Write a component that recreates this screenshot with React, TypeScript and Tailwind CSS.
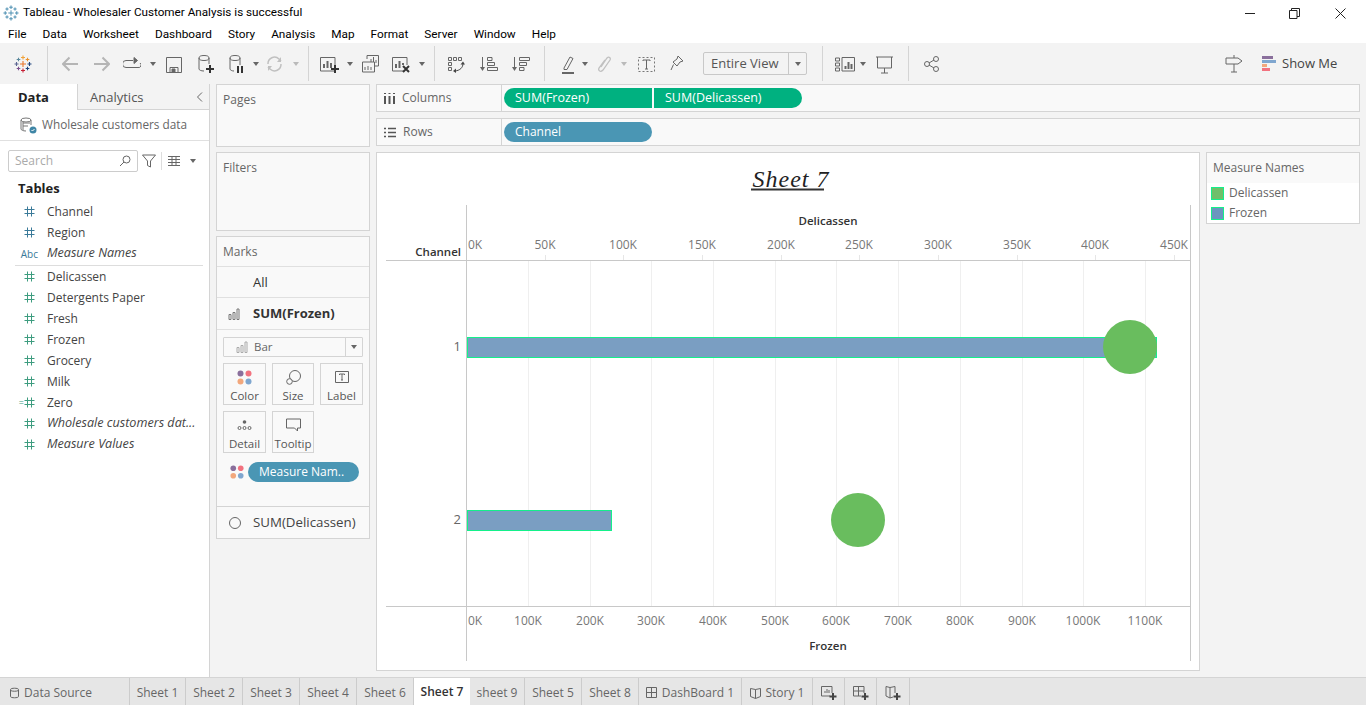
import React from 'react'

function Caret({ className = '' }: { className?: string }) {
  return (
    <svg width="6" height="4" viewBox="0 0 6 4" className={`shrink-0 ${className}`}>
      <path d="M0 0h6L3 4z" fill="#666" />
    </svg>
  )
}

function Sep({ className = '' }: { className?: string }) {
  return <div className={`w-px h-[35px] bg-[#d4d4d4] shrink-0 ${className}`} />
}

function Icon({ w, h = 20, className = '', children }: { w: number; h?: number; className?: string; children: React.ReactNode }) {
  return (
    <svg width={w} height={h} viewBox={`0 0 ${w} ${h}`} fill="none" stroke="#666" strokeWidth="1" className={`shrink-0 ${className}`}>
      {children}
    </svg>
  )
}

function TableauLogo({ size = 18, mono = false }: { size?: number; mono?: boolean }) {
  const c = (x: string) => (mono ? '#4a8db0' : x)
  const cross = (x: number, y: number, r: number, col: string) => (
    <path key={`${x}-${y}`} d={`M${x - r} ${y}h${r * 2}M${x} ${y - r}v${r * 2}`} stroke={c(col)} strokeWidth="1.1" />
  )
  return (
    <svg width={size} height={size} viewBox="0 0 18 18" fill="none" className="shrink-0">
      {cross(9, 9, 3, '#e8762b')}
      {cross(9, 2.5, 2, '#f0a33a')}
      {cross(9, 15.5, 2, '#c72035')}
      {cross(2.5, 9, 2, '#5b6591')}
      {cross(15.5, 9, 2, '#1f447e')}
      {cross(4.5, 4.5, 1.8, '#59879b')}
      {cross(13.5, 4.5, 1.8, '#eb912b')}
      {cross(4.5, 13.5, 1.8, '#7a4f8c')}
      {cross(13.5, 13.5, 1.8, '#1f447e')}
    </svg>
  )
}

function Hash({ color = '#3d9c7f' }: { color?: string }) {
  return (
    <svg width="11" height="11" viewBox="0 0 11 11" className="shrink-0" fill="none" stroke={color} strokeWidth="1">
      <path d="M3.5 0.5v10M7.5 0.5v10M0.5 3.5h10M0.5 7.5h10" />
    </svg>
  )
}

function Dots({ size = 15 }: { size?: number }) {
  return (
    <svg width={size} height={size} viewBox="0 0 15 15" className="shrink-0">
      <circle cx="3.5" cy="3.5" r="3" fill="#8a6f9c" />
      <circle cx="11.5" cy="3.5" r="3" fill="#f2727f" />
      <circle cx="3.5" cy="11.5" r="3" fill="#f2a77c" />
      <circle cx="11.5" cy="11.5" r="3" fill="#7fa6cf" />
    </svg>
  )
}

function BarGlyph({ color = '#777' }: { color?: string }) {
  return (
    <svg width="12" height="12" viewBox="0 0 12 12" fill="none" stroke={color} className="shrink-0">
      <path d="M1 6.5h2v5H1zM5 4.5h2v7H5zM9 1h2v10.5H9z" />
    </svg>
  )
}

function Toolbar() {
  return (
    <div className="h-[41px] bg-[#f3f3f3] flex items-center shrink-0 text-[#555]">
      <div className="ml-[14px]"><TableauLogo size={18} /></div>
      <Sep className="ml-[15px]" />
      <Icon w={16} className="ml-[14px]"><path d="M16 10H1M7.5 3.5L1 10l6.5 6.5" stroke="#b5b5b5" strokeWidth="2" /></Icon>
      <Icon w={16} className="ml-[16px]"><path d="M0 10h15M8.5 3.5L15 10l-6.5 6.5" stroke="#b5b5b5" strokeWidth="2" /></Icon>
      <Icon w={18} className="ml-[13px]"><path d="M10 6.5H3a3 3 0 0 0 0 7h12a2.5 2.5 0 0 0 2-4.5" /><path d="M11 3.5l3.5 3-3.5 3z" fill="#666" /></Icon>
      <Caret className="ml-[9px]" />
      <Icon w={16} className="ml-[10px]"><path d="M.5 3.5h15v15H.5zM4 18.5v-5h8v5" /><path d="M6 15h3v3H6z" fill="#666" /></Icon>
      <Icon w={16} className="ml-[16px]"><ellipse cx="6" cy="4" rx="5" ry="2.5" /><path d="M1 4v11c0 1 2 2 5 2M11 4v6" /><path d="M12 11v8M8 15h8" strokeWidth="2" stroke="#333" /></Icon>
      <Icon w={15} className="ml-[15px]"><ellipse cx="6" cy="4" rx="5" ry="2.5" /><path d="M1 4v11c0 1 2 2 4 2M11 4v7" /><path d="M9 12v7M13 12v7" strokeWidth="2" stroke="#333" /></Icon>
      <Caret className="ml-[9px]" />
      <Icon w={17} className="ml-[7px]"><path d="M2 10a6.5 6.5 0 0 1 11-5l2 2M15 10a6.5 6.5 0 0 1-11 5l-2-2" stroke="#c0c0c0" strokeWidth="1.5" /><path d="M15 3v5h-4zM2 17v-5h4z" fill="#c0c0c0" stroke="none" /></Icon>
      <Caret className="ml-[10px] opacity-40" />
      <Sep className="ml-[9px]" />
      <Icon w={20} className="ml-[11px]"><path d="M14 17H.5V3.5H15V11" /><path d="M4 14v-4M7.5 14V7M11 14v-5" strokeWidth="2" /><path d="M15 11v8M11 15h8" strokeWidth="2" stroke="#333" /></Icon>
      <Caret className="ml-[7px]" />
      <Icon w={17} className="ml-[9px]"><path d="M5 5V1.5h11.5V12H13" /><path d="M.5 8h12v10H.5z" fill="#f3f3f3" /><path d="M9 8V5M11.5 8V3M14 9V6M3 16v-3M6 16v-4M9 16v-3" /></Icon>
      <Icon w={18} className="ml-[13px]"><path d="M11 17H.5V3.5H15V11" /><path d="M4 14v-4M7.5 14V7M11 11V9" strokeWidth="2" /><path d="M11 12l6 6M17 12l-6 6" strokeWidth="2" stroke="#333" /></Icon>
      <Caret className="ml-[9px]" />
      <Sep className="ml-[9px]" />
      <Icon w={20} className="ml-[11px]">
        <path d="M2.5 3.5h3v3h-3zM7.5 3.5h3v3h-3zM12.5 3.5h3v3h-3zM2.5 8.500h3v3h-3zM2.5 13.500h3v3h-3z" />
        <path d="M17 9.500c0 4-3 7-8 7.500" stroke="#444" />
        <path d="M14.500 10.500l2.500-3 2 3zM10 14.500l-3 2.500 3 2z" fill="#444" stroke="none" />
      </Icon>
      <Icon w={19} className="ml-[14px]">
        <path d="M2.5 3v11" />
        <path d="M0 13h5l-2.500 4z" fill="#666" stroke="none" />
        <path d="M7.500 3.500h4.500v3H7.500zM7.500 8.500h7v3h-7zM7.500 13.500h10v3h-10z" />
      </Icon>
      <Icon w={18} className="ml-[13px]">
        <path d="M2.500 3v11" />
        <path d="M0 13h5l-2.500 4z" fill="#666" stroke="none" />
        <path d="M7.500 3.500h10v3h-10zM7.500 8.500h7v3h-7zM7.500 13.500h4.500v3H7.500z" />
      </Icon>
      <Sep className="ml-[14px]" />
      <Icon w={13} className="ml-[16px]"><path d="M3 14L9 3l3 1.5-6 11H3z" /><path d="M1 19h12" strokeWidth="2" /></Icon>
      <Caret className="ml-[8px]" />
      <Icon w={13} className="ml-[10px]"><path d="M3 13l6-9c2-2 4 0 3 2l-7 10c-3 3-5 0-4-2l6-8" stroke="#c0c0c0" strokeWidth="1.3" /></Icon>
      <Caret className="ml-[10px] opacity-40" />
      <Icon w={17} className="ml-[11px]"><path d="M.5 3.5h16v14H.5z" strokeDasharray="2 2" stroke="#777" /><path d="M5 7V6h7v1M8.5 6v9M7 15h3" /></Icon>
      <Icon w={14} className="ml-[15px]"><path d="M8 2l5 5-3 1-3 4-4-4 4-3zM3.5 10.5L1 16" /></Icon>
      <div className="ml-[19px] w-[104px] h-[23px] border border-[#c8c8c8] rounded-[2px] flex items-center shrink-0">
        <span className="w-[85px] pl-[7px] text-[13px] leading-none text-[#555] border-r border-[#c8c8c8] h-full flex items-center">Entire View</span>
        <Caret className="ml-[6px]" />
      </div>
      <Sep className="ml-[15px]" />
      <Icon w={20} className="ml-[12px]"><path d="M.5 4h4v3h-4zM.5 9h4v3h-4zM.5 14h4v3h-4zM7 3.5h12.5V17H7z" /><path d="M10.5 15v-3M13.5 15V8M16.5 15v-5" strokeWidth="2" /></Icon>
      <Caret className="ml-[5px]" />
      <Icon w={17} className="ml-[10px]"><path d="M0 3h17M1.5 3v11h14V3M8.5 14v5M5 19h7" /></Icon>
      <Sep className="ml-[15px]" />
      <Icon w={15} className="ml-[15px]"><circle cx="3" cy="10" r="2.5" /><circle cx="12" cy="5" r="2.5" /><circle cx="12" cy="15" r="2.5" /><path d="M5 9l5-3M5 11l5 3" /></Icon>
      <Icon w={18} className="ml-[286px]"><path d="M9 1v3M1 4h12l4 3-4 3H1zM9 10v8M6 18h6" /></Icon>
      <svg width="14" height="18" viewBox="0 0 14 18" className="ml-[19px] shrink-0">
        <path d="M0 1h11v3H0z" fill="#8a6f9c" />
        <path d="M0 5h14v3H0z" fill="#7fa6cf" />
        <path d="M0 9h5v3H0z" fill="#f2a77c" />
        <path d="M0 13h8v3H0z" fill="#f2727f" />
      </svg>
      <span className="ml-[6px] text-[13px] text-[#444] whitespace-nowrap">Show Me</span>
    </div>
  )
}

const dims = ['Channel', 'Region']
const measures = ['Delicassen', 'Detergents Paper', 'Fresh', 'Frozen', 'Grocery', 'Milk']

function FieldRow({ icon, label, italic = false }: { icon: React.ReactNode; label: string; italic?: boolean }) {
  return (
    <div className="h-[21px] flex items-center">
      <div className="w-[47px] pr-[12px] flex justify-end shrink-0">{icon}</div>
      <span className={`text-[#444] whitespace-nowrap ${italic ? 'italic text-[12.6px]' : ''}`}>{label}</span>
    </div>
  )
}

function Sidebar() {
  return (
    <aside className="w-[210px] shrink-0 bg-white border-r border-[#d4d4d4] flex flex-col text-[12px]">
      <div className="h-[26px] flex shrink-0 text-[13px] leading-none">
        <div className="w-[77px] pl-[18px] pt-[1px] flex items-center font-bold text-[#222]">Data</div>
        <div className="flex-1 bg-[#f3f3f3] border-l border-b border-[#d4d4d4] flex items-center justify-between pl-[12px] pr-[6px] pt-[1px] text-[#555]">
          Analytics
          <svg width="7" height="10" viewBox="0 0 7 10" fill="none" stroke="#666"><path d="M6 .5L1.5 5 6 9.5" /></svg>
        </div>
      </div>
      <div className="h-[31px] flex items-center pl-[20px] border-b border-[#e0e0e0] shrink-0 text-[#666] text-[11.8px]">
        <svg width="17" height="17" viewBox="0 0 17 17" fill="none" stroke="#777" className="shrink-0 mr-[5px]">
          <ellipse cx="6" cy="3" rx="5" ry="2" />
          <path d="M1 3v9c0 1 2 2 5 2M11 3v5M3 6h7M3 9h5M3 5v8" />
          <circle cx="13" cy="13" r="3.5" fill="#3f86a6" stroke="none" />
          <path d="M11.5 13l1 1 2-2" stroke="#fff" />
        </svg>
        Wholesale customers data
      </div>
      <div className="flex items-center mt-[9px] ml-[8px] shrink-0">
        <div className="w-[130px] h-[22px] border border-[#ccc] rounded-[2px] flex items-center justify-between pl-[6px] pr-[6px] text-[#aaa]">
          Search
          <svg width="12" height="12" viewBox="0 0 12 12" fill="none" stroke="#666"><circle cx="7.5" cy="4.5" r="3.5" /><path d="M5 7l-4 4" /></svg>
        </div>
        <svg width="14" height="14" viewBox="0 0 14 14" fill="none" stroke="#666" className="ml-[4px]"><path d="M.5 1h13L8.5 7v6l-3-1.5V7z" /></svg>
        <div className="w-px h-[18px] bg-[#ddd] ml-[5px]" />
        <svg width="12" height="10" viewBox="0 0 12 10" fill="none" stroke="#666" className="ml-[6px]"><path d="M0 .5h12M0 3.5h12M0 6.5h12M0 9.5h12M4 0v10M8 0v10" /></svg>
        <Caret className="ml-[10px]" />
      </div>
      <div className="pl-[18px] mt-[7px] h-[20px] flex items-center font-bold text-[13px] text-[#222]">Tables</div>
      <div className="mt-[2px] flex flex-col">
        {dims.map((d) => (
          <FieldRow key={d} label={d} icon={<Hash color="#3a7a99" />} />
        ))}
        <FieldRow label="Measure Names" italic icon={<span className="text-[10px] text-[#3a7a99] leading-none -mr-[3px]">Abc</span>} />
        <div className="h-px mt-[1px] bg-[#ddd] ml-[15px] mr-[6px]" />
        {measures.map((m) => (
          <FieldRow key={m} label={m} icon={<Hash />} />
        ))}
        <FieldRow label="Zero" icon={<span className="flex items-center text-[#3d9c7f] text-[9px] leading-none">=<Hash /></span>} />
        <FieldRow label="Wholesale customers dat..." italic icon={<Hash />} />
        <FieldRow label="Measure Values" italic icon={<Hash />} />
      </div>
    </aside>
  )
}

function MarkBtn({ icon, label }: { icon: React.ReactNode; label: string }) {
  return (
    <div className="h-[42px] border border-[#d4d4d4] flex flex-col items-center justify-end pb-[1px] text-[11.5px] text-[#555] leading-[15px]">
      <div className="h-[20px] mb-[1px] flex items-center">{icon}</div>
      {label}
    </div>
  )
}

function Cards() {
  return (
    <div className="w-[154px] shrink-0 flex flex-col gap-[5px] text-[12px] text-[#666]">
      <div className="h-[63px] bg-[#f9f9f9] border border-[#d4d4d4] px-[6px] pt-[6px]">Pages</div>
      <div className="h-[79px] bg-[#f9f9f9] border border-[#d4d4d4] px-[6px] pt-[6px]">Filters</div>
      <div className="h-[303px] bg-[#f9f9f9] border border-[#d4d4d4] flex flex-col">
        <div className="h-[30px] px-[6px] flex items-center border-b border-[#e0e0e0] shrink-0">Marks</div>
        <div className="h-[31px] pl-[36px] pt-[1px] flex items-center border-b border-[#e0e0e0] text-[#333] text-[13px] shrink-0">All</div>
        <div className="h-[32px] pl-[11px] flex items-center border-b border-[#e0e0e0] font-bold text-[#333] text-[13px] shrink-0">
          <BarGlyph />
          <span className="ml-[13px]">SUM(Frozen)</span>
        </div>
        <div className="px-[6px] pt-[7px] flex-1">
          <div className="h-[20px] border border-[#d4d4d4] rounded-[1px] flex items-center">
            <div className="flex-1 flex items-center pl-[12px] gap-[6px] border-r border-[#d4d4d4] h-full text-[11.5px]">
              <BarGlyph color="#aaa" />
              Bar
            </div>
            <Caret className="mx-[5px]" />
          </div>
          <div className="grid grid-cols-[43px_42px_43px] gap-[6px] mt-[6px]">
            <MarkBtn label="Color" icon={<Dots />} />
            <MarkBtn label="Size" icon={
              <svg width="15" height="15" viewBox="0 0 15 15" fill="none" stroke="#666"><circle cx="9" cy="6" r="5.5" /><circle cx="3.5" cy="11.5" r="2.8" fill="#f9f9f9" /></svg>
            } />
            <MarkBtn label="Label" icon={
              <svg width="14" height="14" viewBox="0 0 14 14" fill="none" stroke="#666"><path d="M.5 1.5h13v11H.5zM4.5 5V4h5v1M7 4v6M6 10h2" /></svg>
            } />
            <MarkBtn label="Detail" icon={
              <svg width="15" height="12" viewBox="0 0 15 12" fill="none" stroke="#666"><circle cx="7.5" cy="3" r="1.8" fill="#666" stroke="none" /><circle cx="2.5" cy="9" r="1.5" /><circle cx="7.5" cy="9" r="1.5" /><circle cx="12.5" cy="9" r="1.5" /></svg>
            } />
            <MarkBtn label="Tooltip" icon={
              <svg width="15" height="14" viewBox="0 0 15 14" fill="none" stroke="#666"><path d="M.5 1h14v9h-3v3l-3-3H.5z" /></svg>
            } />
          </div>
          <div className="flex items-center mt-[9px] ml-[7px]">
            <Dots size={14} />
            <div className="ml-[4px] w-[111px] h-[20px] rounded-full bg-[#4a96b4] text-white text-[12px] flex items-center pl-[11px] whitespace-nowrap">Measure Nam..</div>
          </div>
        </div>
        <div className="h-[32px] pl-[12px] flex items-center border-t border-[#d4d4d4] text-[#444] text-[13.3px] shrink-0">
          <svg width="12" height="12" viewBox="0 0 12 12" fill="none" stroke="#666" className="shrink-0"><circle cx="6" cy="6" r="5.5" /></svg>
          <span className="ml-[12px] whitespace-nowrap">SUM(Delicassen)</span>
        </div>
      </div>
    </div>
  )
}

function Shelf({ icon, label, children }: { icon: React.ReactNode; label: string; children: React.ReactNode }) {
  return (
    <div className="h-[28px] bg-[#f9f9f9] border border-[#d4d4d4] flex items-center text-[12px] shrink-0">
      <div className="w-[125px] h-full border-r border-[#d4d4d4] flex items-center pl-[7px] gap-[7px] text-[#666] shrink-0">
        {icon}
        {label}
      </div>
      <div className="flex items-center pl-[2px] gap-[2px] text-white">{children}</div>
    </div>
  )
}

const topTicks = [
  ['0K', 475], ['50K', 545], ['100K', 623], ['150K', 702], ['200K', 781],
  ['250K', 859], ['300K', 938], ['350K', 1017], ['400K', 1095], ['450K', 1174],
] as const
const bottomTicks = [
  ['0K', 475], ['100K', 528], ['200K', 590], ['300K', 651], ['400K', 713], ['500K', 775],
  ['600K', 836], ['700K', 898], ['800K', 960], ['900K', 1022], ['1000K', 1083], ['1100K', 1145],
] as const

function Chart() {
  // viewBox is in page coordinates so the numbers can be read off the screenshot
  return (
    <svg viewBox="377 153 822 517" width="822" height="517" className="block" fontFamily="'Open Sans', sans-serif" fontSize="12">
      {bottomTicks.slice(1).map(([t, x]) => (
        <line key={t} x1={x + 0.5} x2={x + 0.5} y1="261" y2="606" stroke="#efefef" />
      ))}
      {topTicks.slice(1).map(([t, x]) => (
        <line key={t} x1={x + 0.5} x2={x + 0.5} y1="255" y2="260" stroke="#e6e6e6" />
      ))}
      <line x1="466.5" x2="466.5" y1="205" y2="661" stroke="#c8c8c8" />
      <line x1="1190.5" x2="1190.5" y1="205" y2="661" stroke="#c8c8c8" />
      <line x1="386" x2="1191" y1="260.5" y2="260.5" stroke="#c8c8c8" />
      <line x1="386" x2="1191" y1="606.5" y2="606.5" stroke="#c8c8c8" />

      <rect x="467.5" y="337.5" width="689" height="20" fill="#7a9ec2" stroke="#14f08a" />
      <rect x="467.5" y="510.5" width="144" height="20" fill="#7a9ec2" stroke="#14f08a" />
      <circle cx="1130" cy="347" r="27" fill="#69bd5e" />
      <circle cx="858" cy="520" r="27" fill="#69bd5e" />

      <text x="828" y="225" textAnchor="middle" fontWeight="600" fontSize="11.5" fill="#333">Delicassen</text>
      <text x="828" y="650" textAnchor="middle" fontWeight="600" fontSize="11.5" fill="#333">Frozen</text>
      <text x="461" y="256" textAnchor="end" fontWeight="600" fontSize="11.5" fill="#333">Channel</text>
      <text x="461" y="351" textAnchor="end" fontSize="13" fill="#666">1</text>
      <text x="461" y="524" textAnchor="end" fontSize="13" fill="#666">2</text>
      {topTicks.map(([t, x]) => (
        <text key={t} x={x} y="249" textAnchor="middle" fill="#777">{t}</text>
      ))}
      {bottomTicks.map(([t, x]) => (
        <text key={t} x={x} y="625" textAnchor="middle" fill="#777">{t}</text>
      ))}
      <text x="791" y="187" textAnchor="middle" fontFamily="'Liberation Serif', serif" fontStyle="italic" fontSize="24" letterSpacing="1" fill="#222">Sheet 7</text>
      <line x1="751" x2="824" y1="189.5" y2="189.5" stroke="#333" strokeWidth="2" />
    </svg>
  )
}

function Legend() {
  return (
    <div className="w-[154px] h-[72px] border border-[#d4d4d4] bg-white text-[12px] shrink-0">
      <div className="h-[30px] bg-[#f9f9f9] pl-[6px] pb-[1px] flex items-center text-[#666]">Measure Names</div>
      <div className="h-[20px] pl-[4px] flex items-center text-[#666]">
        <div className="w-[13px] h-[13px] bg-[#6fbf6a] border border-[#14f08a] mr-[5px]" />Delicassen
      </div>
      <div className="h-[20px] pl-[4px] flex items-center text-[#666]">
        <div className="w-[13px] h-[13px] bg-[#6b96bf] border border-[#14f08a] mr-[5px]" />Frozen
      </div>
    </div>
  )
}

const tabs: [string, string][] = [
  ['Sheet 1', 'w-[56px]'], ['Sheet 2', 'w-[57px]'], ['Sheet 3', 'w-[57px]'], ['Sheet 4', 'w-[57px]'], ['Sheet 6', 'w-[57px]'],
]
const tabs2: [string, string][] = [['sheet 9', 'w-[55px]'], ['Sheet 5', 'w-[57px]'], ['Sheet 8', 'w-[57px]']]

function Tab({ className, children }: { className: string; children: React.ReactNode }) {
  return (
    <div className={`h-full flex items-center justify-center gap-[5px] pt-[2px] border-r border-[#ccc] shrink-0 text-[#666] ${className}`}>
      {children}
    </div>
  )
}

function TabBar() {
  return (
    <div className="h-[28px] bg-[#e6e6e6] border-t border-[#d4d4d4] flex shrink-0 text-[12px]">
      <div className="w-[130px] h-full flex items-center pl-[10px] pt-[2px] gap-[5px] border-r border-[#ccc] text-[#666] shrink-0">
        <svg width="9" height="12" viewBox="0 0 9 12" fill="none" stroke="#666"><path d="M.5 2.5C.5.8 8.5.8 8.5 2.5v7c0 1.700-8 1.700-8 0zM.5 3.5c2 1 6 1 8 0" /></svg>
        Data Source
      </div>
      {tabs.map(([t, w]) => <Tab key={t} className={w}>{t}</Tab>)}
      <div className="w-[56px] h-full bg-white flex items-center justify-center font-semibold text-[#333] shrink-0">Sheet 7</div>
      {tabs2.map(([t, w]) => <Tab key={t} className={w}>{t}</Tab>)}
      <Tab className="w-[103px]">
        <svg width="11" height="11" viewBox="0 0 11 11" fill="none" stroke="#666"><path d="M.5.5h10v10H.5zM.5 5.5h10M5.5.5v10" /></svg>
        DashBoard 1
      </Tab>
      <Tab className="w-[71px]">
        <svg width="11" height="12" viewBox="0 0 11 12" fill="none" stroke="#666"><path d="M.5 1.5l5 1 5-1v8l-5 2-5-2zM5.5 2.5v9" /></svg>
        Story 1
      </Tab>
      <Tab className="w-[32px]">
        <svg width="16" height="16" viewBox="0 0 16 16" fill="none" stroke="#666"><path d="M9 11H.5V1.5H11V8M4 8V6M6 8V4M8 8V5" /><path d="M12 8v7M8.5 11.5h7" stroke="#444" strokeWidth="2" /></svg>
      </Tab>
      <Tab className="w-[32px]">
        <svg width="16" height="16" viewBox="0 0 16 16" fill="none" stroke="#666"><path d="M8 11H.5V1.5H11V8M.5 6h10.5M5.5 1.5V11" /><path d="M12 8v7M8.5 11.5h7" stroke="#444" strokeWidth="2" /></svg>
      </Tab>
      <Tab className="w-[33px]">
        <svg width="16" height="16" viewBox="0 0 16 16" fill="none" stroke="#666"><path d="M8 12l-3 1-4-2V1.5l4 1 5-1V8M5 2.5V13" /><path d="M12 8v7M8.5 11.5h7" stroke="#444" strokeWidth="2" /></svg>
      </Tab>
    </div>
  )
}

const menu = ['File', 'Data', 'Worksheet', 'Dashboard', 'Story', 'Analysis', 'Map', 'Format', 'Server', 'Window', 'Help']

export default function App() {
  return (
    <div className="w-[1366px] h-[705px] flex flex-col bg-white overflow-hidden font-['Open_Sans',sans-serif]">
      <div className="h-[26px] flex items-center shrink-0 pl-[3px] text-[11.7px] text-black font-['Roboto',sans-serif]">
        <TableauLogo size={16} mono />
        <span className="ml-[4px]">Tableau - Wholesaler Customer Analysis is successful</span>
        <div className="ml-auto flex items-center">
          <svg width="11" height="11" viewBox="0 0 11 11" fill="none" stroke="#222"><path d="M1 5.5h10" /></svg>
          <svg width="11" height="11" viewBox="0 0 11 11" fill="none" stroke="#222" className="ml-[34px]"><path d="M.5 2.5h7.500v8H.5zM2.5 2.5V.5h8v8H8" /></svg>
          <svg width="11" height="11" viewBox="0 0 11 11" fill="none" stroke="#222" className="ml-[35px] mr-[20px]"><path d="M.5.5l10 10M10.5.5l-10 10" /></svg>
        </div>
      </div>
      <nav className="h-[17px] flex items-center shrink-0 pl-[8px] gap-[16px] text-[11.8px] text-black font-['Roboto',sans-serif]">
        {menu.map((m) => <span key={m}>{m}</span>)}
      </nav>
      <Toolbar />
      <main className="flex-1 min-h-0 flex bg-[#f3f3f3]">
        <Sidebar />
        <div className="flex-1 min-w-0 flex gap-[6px] pl-[6px] pr-[6px]">
          <Cards />
          <div className="flex-1 min-w-0 flex flex-col gap-[6px]">
            <Shelf label="Columns" icon={<svg width="11" height="11" viewBox="0 0 11 11" fill="none" stroke="#555" strokeWidth="2"><path d="M1 3v8M5.5 3v8M10 3v8M1 0v1M5.5 0v1M10 0v1" /></svg>}>
              <div className="w-[148px] h-[20px] bg-[#00b180] rounded-l-full flex items-center pl-[11px] text-[12.5px]">SUM(Frozen)</div>
              <div className="w-[148px] h-[20px] bg-[#00b180] rounded-r-full flex items-center pl-[11px] text-[12.5px]">SUM(Delicassen)</div>
            </Shelf>
            <Shelf label="Rows" icon={<svg width="12" height="11" viewBox="0 0 12 11" fill="none" stroke="#555" strokeWidth="1.5"><path d="M0 1.5h2M4 1.5h8M0 5.5h2M4 5.5h8M0 9.5h2M4 9.5h8" /></svg>}>
              <div className="w-[148px] h-[20px] bg-[#4a96b4] rounded-full flex items-center pl-[11px]">Channel</div>
            </Shelf>
            <div className="flex gap-[6px]">
              <div className="w-[824px] h-[519px] border border-[#d4d4d4] bg-white shrink-0">
                <Chart />
              </div>
              <Legend />
            </div>
          </div>
        </div>
      </main>
      <TabBar />
    </div>
  )
}
